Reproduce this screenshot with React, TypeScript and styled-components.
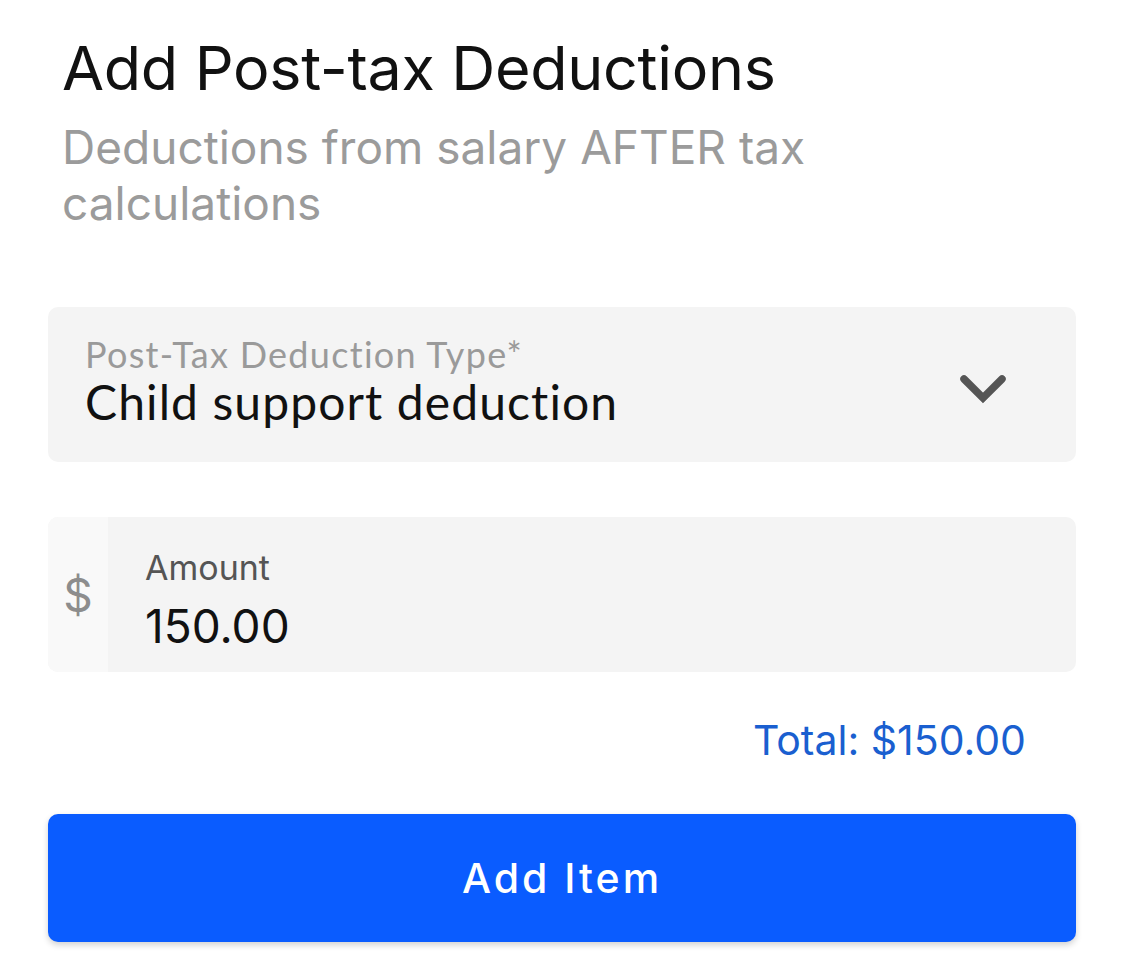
import React from "react";
import styled, { createGlobalStyle } from "styled-components";

const Global = createGlobalStyle`
  html, body { margin: 0; padding: 0; background: #ffffff; }
  body { font-family: Inter, "Noto Sans", sans-serif; -webkit-font-smoothing: antialiased; }
`;

const Page = styled.div`
  width: 1125px;
  height: 976px;
  box-sizing: border-box;
  padding: 0 49px 0 48px;
  display: flex;
  flex-direction: column;
`;

const Header = styled.header`
  padding: 28px 0 0 14px;
  display: flex;
  flex-direction: column;
`;

const Title = styled.h1`
  margin: 0;
  font-family: Inter, sans-serif;
  font-weight: 400;
  font-size: 61px;
  line-height: 80px;
  color: #111111;
  letter-spacing: -0.3px;
`;

const Subtitle = styled.p`
  margin: 11px 0 0;
  font-family: Inter, sans-serif;
  font-size: 46px;
  line-height: 56px;
  color: #9b9b9b;
  max-width: 760px;
`;

const Field = styled.div<{ $mt: number }>`
  margin-top: ${(p) => p.$mt}px;
  height: 155px;
  border-radius: 10px;
  background: #f4f4f4;
  display: flex;
  align-items: stretch;
  overflow: hidden;
`;

const SelectBody = styled.div`
  flex: 1;
  display: flex;
  flex-direction: column;
  justify-content: center;
  padding: 0 0 6px 37px;
`;

const SelectLabel = styled.div`
  font-family: Lato, sans-serif;
  font-size: 36px;
  line-height: 40px;
  letter-spacing: 1.3px;
  color: #9a9a9a;
`;

const SelectValue = styled.div`
  font-family: Lato, sans-serif;
  font-size: 48px;
  line-height: 56px;
  letter-spacing: 1.1px;
  color: #111111;
`;

const Chevron = styled.div`
  display: flex;
  align-items: center;
  padding: 8px 69px 0 0;
`;

const Prefix = styled.div`
  width: 60px;
  background: #f9f9f9;
  display: flex;
  align-items: center;
  justify-content: center;
  font-family: Inter, sans-serif;
  font-size: 46px;
  color: #8d8d8d;
`;

const AmountBody = styled.div`
  flex: 1;
  display: flex;
  flex-direction: column;
  padding: 29px 0 0 37px;
`;

const AmountLabel = styled.div`
  font-family: Inter, sans-serif;
  font-size: 34px;
  line-height: 44px;
  color: #555555;
`;

const AmountValue = styled.div`
  margin-top: 6px;
  font-family: Inter, sans-serif;
  font-size: 46px;
  line-height: 60px;
  color: #111111;
`;

const Total = styled.div`
  margin-top: 44px;
  padding-right: 50px;
  text-align: right;
  font-family: Inter, sans-serif;
  font-size: 41px;
  line-height: 48px;
  color: #1a5fd0;
`;

const Button = styled.button`
  margin-top: 50px;
  height: 128px;
  border: none;
  border-radius: 10px;
  background: #0a5cff;
  box-shadow: 0 3px 6px rgba(0, 0, 0, 0.18);
  color: #ffffff;
  font-family: Inter, sans-serif;
  font-size: 41px;
  font-weight: 500;
  letter-spacing: 3px;
  cursor: pointer;
`;

export default function App() {
  return (
    <>
      <Global />
      <Page>
        <Header>
          <Title>Add Post-tax Deductions</Title>
          <Subtitle>Deductions from salary AFTER tax calculations</Subtitle>
        </Header>
        <Field $mt={76}>
          <SelectBody>
            <SelectLabel>Post-Tax Deduction Type*</SelectLabel>
            <SelectValue>Child support deduction</SelectValue>
          </SelectBody>
          <Chevron>
            <svg width="48" height="30" viewBox="0 0 48 30">
              <path d="M5 5 L24 24 L43 5" fill="none" stroke="#555555" strokeWidth="7.5" strokeLinecap="round" strokeLinejoin="miter" />
            </svg>
          </Chevron>
        </Field>
        <Field $mt={55}>
          <Prefix>$</Prefix>
          <AmountBody>
            <AmountLabel>Amount</AmountLabel>
            <AmountValue>150.00</AmountValue>
          </AmountBody>
        </Field>
        <Total>Total: $150.00</Total>
        <Button>Add Item</Button>
      </Page>
    </>
  );
}
